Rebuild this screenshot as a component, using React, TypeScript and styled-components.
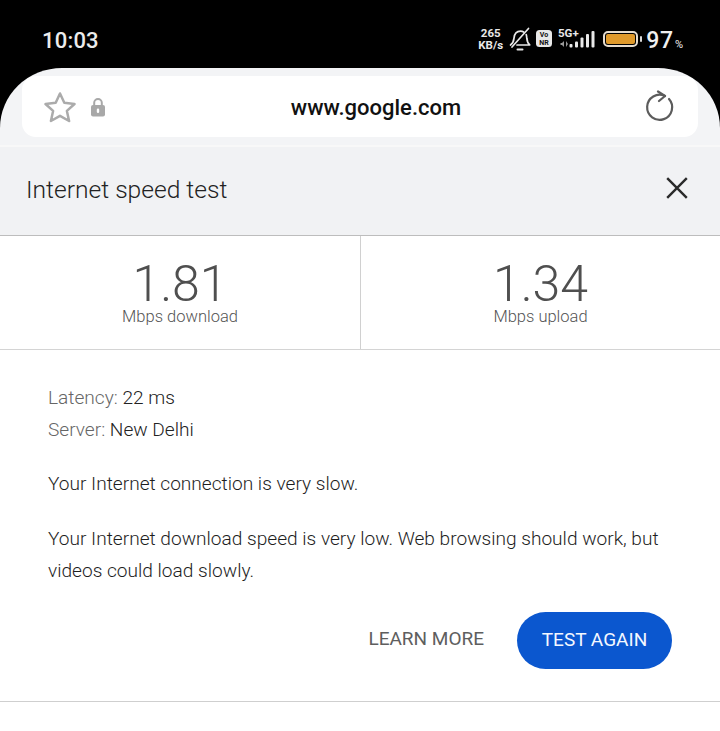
import React from "react";
import styled, { createGlobalStyle } from "styled-components";

const Global = createGlobalStyle`
  html, body { margin: 0; padding: 0; background: #fff; }
  * { box-sizing: border-box; }
  body { font-family: Roboto, "Liberation Sans", sans-serif; }
`;

const Page = styled.div`
  width: 720px;
  height: 731px;
  overflow: hidden;
  background: #fff;
  display: flex;
  flex-direction: column;
`;

const TopArea = styled.div`
  background: #000;
  height: 145px;
  display: flex;
  flex-direction: column;
`;

const StatusBar = styled.div`
  height: 68px;
  flex: none;
  display: flex;
  align-items: center;
  justify-content: space-between;
  padding: 9px 37px 0 42px;
  color: #f2f2f2;
`;

const Time = styled.span`
  font-size: 22px;
  font-weight: 500;
  letter-spacing: 0.2px;
  color: #ececec;
  margin-top: 4px;
`;

const StatusIcons = styled.div`
  display: flex;
  align-items: center;
`;

const Speed = styled.div`
  width: 25px;
  font-size: 11.5px;
  line-height: 12px;
  font-weight: 700;
  color: #e8e8e8;
  text-align: center;
  margin-right: 6px;
  white-space: nowrap;
`;

const Battery = styled.div`
  margin-left: 6px;
  width: 35px;
  height: 16px;
  border: 2px solid #e6ddd0;
  border-radius: 5px;
  padding: 1px;
  position: relative;
`;

const BatteryFill = styled.div`
  width: 100%;
  height: 100%;
  background: #e09a2b;
  border-radius: 2px;
`;

const BatteryTip = styled.div`
  position: absolute;
  right: -6px;
  top: 3px;
  width: 2px;
  height: 6px;
  background: #d8d8d8;
  border-radius: 1px;
`;

const Percent = styled.span`
  margin-left: 8px;
  padding-top: 3px;
  font-size: 23px;
  font-weight: 500;
  color: #f0f0f0;
  letter-spacing: 0.8px;
`;

const PercentSign = styled.span`
  font-size: 11px;
  font-weight: 400;
  letter-spacing: 0;
  margin-left: 1px;
`;

const BrowserBar = styled.div`
  flex: 1;
  background: #f3f4f6;
  border-radius: 62px 62px 0 0 / 60px 60px 0 0;
  padding: 8px 22px 8px;
`;

const Address = styled.div`
  height: 61px;
  background: #fff;
  border-radius: 14px;
  display: flex;
  align-items: center;
  padding: 0 23px 0 22px;
`;

const LeftIcons = styled.div`
  display: flex;
  align-items: center;
  gap: 15px;
  width: 92px;
`;

const Url = styled.div`
  flex: 1;
  text-align: center;
  font-size: 22px;
  font-weight: 500;
  color: #111;
  padding: 1px 29px 0 0;
`;

const Header = styled.div`
  height: 91px;
  background: #f1f2f4;
  border-top: 2px solid #f8f8f8;
  border-bottom: 1px solid #bdbdbd;
  display: flex;
  align-items: center;
  justify-content: space-between;
  padding: 0 32px 4px 26px;
`;

const Title = styled.h1`
  margin: 0;
  font-size: 24.6px;
  font-weight: 300;
  color: #222;
`;

const CloseIcon = styled.svg`
  margin-bottom: 2px;
`;

const Stats = styled.div`
  height: 114px;
  display: grid;
  grid-template-columns: 360px 360px;
  border-bottom: 1px solid #d4d4d4;
`;

const Stat = styled.div<{ $divider?: boolean }>`
  display: flex;
  flex-direction: column;
  align-items: center;
  padding-top: 23px;
  border-left: ${(p) => (p.$divider ? "1px solid #d0d0d0" : "none")};
`;

const StatValue = styled.div`
  font-size: 50px;
  line-height: 50px;
  font-weight: 300;
  color: #4f4f4f;
`;

const StatLabel = styled.div`
  font-size: 16.5px;
  line-height: 15px;
  font-weight: 300;
  color: #555;
`;

const Body = styled.div`
  padding: 32px 48px 0;
  height: 352px;
  border-bottom: 1px solid #cfcfcf;
`;

const Meta = styled.div`
  font-size: 19.1px;
  line-height: 32px;
  color: #222;
  font-weight: 300;
`;

const MetaKey = styled.span`
  color: #666;
`;

const Para = styled.p<{ $top: number }>`
  margin: ${(p) => p.$top}px 0 0;
  font-size: 19.1px;
  line-height: 32px;
  font-weight: 300;
  color: #1e1e1e;
`;

const Actions = styled.div`
  display: flex;
  justify-content: flex-end;
  align-items: center;
  gap: 33px;
  margin-top: 25px;
`;

const LinkButton = styled.span`
  font-size: 19px;
  color: #5e5e5e;
  font-weight: 400;
  padding-bottom: 5px;
`;

const PrimaryButton = styled.button`
  width: 155px;
  height: 57px;
  background: #0b57cf;
  color: #f4f8ff;
  border: 0;
  border-radius: 29px;
  font-family: inherit;
  font-size: 19px;
  font-weight: 400;
  padding: 0 0 2px;
`;

const VoBadge = styled.svg`
  margin: 0 6px 0 5px;
`;

const BellOff = () => (
  <svg width="22" height="24" viewBox="0 0 22 24" fill="none" stroke="#e8e8e8" strokeWidth="1.7" strokeLinecap="round" strokeLinejoin="round">
    <path d="M1.5 18c2.4-1.6 3.2-3.6 3.5-6.8.4-4 2.8-7 6.5-7 1.3 0 2.4.3 3.2.8" />
    <path d="M17.2 7.6c.3 1 .5 2.2.6 3.6.3 3.2 1 5.2 2.9 6.8H8" />
    <path d="M19.5 1.5 3 20" />
    <path d="M8.5 22.5h5" strokeWidth="2" />
  </svg>
);

const VoNr = () => (
  <VoBadge width="16" height="17" viewBox="0 0 16 17">
    <rect x="0" y="0" width="16" height="17" rx="3.5" fill="#e8e8e8" />
    <text x="8" y="7.4" textAnchor="middle" fontSize="7" fontWeight="700" fontFamily="Roboto, sans-serif" fill="#111">Vo</text>
    <text x="8" y="15.4" textAnchor="middle" fontSize="7" fontWeight="700" fontFamily="Roboto, sans-serif" fill="#111">NR</text>
  </VoBadge>
);

const Signal = () => (
  <svg width="39" height="30" viewBox="0 -4 39 30">
    <text x="0" y="8.5" fontSize="11.5" fontWeight="700" fontFamily="Roboto, sans-serif" fill="#e8e8e8">5G+</text>
    <path d="M2.5 15h1.5l2-2v6l-2-2H2.5zM8 13l2 3-2 3z" fill="#9a9a9a" />
    <g fill="#e8e8e8">
      <rect x="11.5" y="16" width="3" height="3.5" rx="1" />
      <rect x="17" y="13.5" width="3" height="6" rx="1" />
      <rect x="22.5" y="9.5" width="3" height="10" rx="1" />
      <rect x="28" y="6" width="3" height="13.5" rx="1" />
      <rect x="33.5" y="3" width="3" height="16.5" rx="1" />
    </g>
  </svg>
);

const Star = () => (
  <svg width="32" height="32" viewBox="0 0 32 32" fill="none" stroke="#ababab" strokeWidth="2.5" strokeLinejoin="round">
    <path d="M16 2.5l4.3 9.2 10.2 1.3-7.6 6.9 2.2 10.1L16 24.8 6.9 30l2.2-10.1L1.5 13l10.2-1.3z" />
  </svg>
);

const Lock = () => (
  <svg width="14" height="20" viewBox="0 0 14 20">
    <path d="M3.2 9V5.8a3.8 3.8 0 0 1 7.6 0V9" fill="none" stroke="#a8a8a8" strokeWidth="2" />
    <rect x="0" y="8" width="14" height="11.5" rx="2" fill="#a8a8a8" />
    <rect x="5.8" y="11.5" width="2.4" height="4.5" rx="1.2" fill="#fff" />
  </svg>
);

const Reload = () => (
  <svg width="30" height="34" viewBox="0 0 30 34" fill="none" stroke="#5c5c5c" strokeWidth="2.2" strokeLinecap="round" strokeLinejoin="round">
    <path d="M24 9A12.5 12.5 0 1 1 20 6" />
    <path d="M13 1.5l7 4.5-6 5" />
  </svg>
);

const Close = () => (
  <CloseIcon width="22" height="22" viewBox="0 0 22 22" fill="none" stroke="#2a2a2a" strokeWidth="2.4">
    <path d="M1.2 1.2l19.6 19.6M20.8 1.2 1.2 20.8" />
  </CloseIcon>
);

export default function App() {
  return (
    <Page>
      <Global />
      <TopArea>
        <StatusBar>
          <Time>10:03</Time>
          <StatusIcons>
            <Speed>265<br />KB/s</Speed>
            <BellOff />
            <VoNr />
            <Signal />
            <Battery>
              <BatteryFill />
              <BatteryTip />
            </Battery>
            <Percent>97<PercentSign>%</PercentSign></Percent>
          </StatusIcons>
        </StatusBar>
        <BrowserBar>
          <Address>
            <LeftIcons>
              <Star />
              <Lock />
            </LeftIcons>
            <Url>www.google.com</Url>
            <Reload />
          </Address>
        </BrowserBar>
      </TopArea>
      <Header>
        <Title>Internet speed test</Title>
        <Close />
      </Header>
      <Stats>
        <Stat>
          <StatValue>1.81</StatValue>
          <StatLabel>Mbps download</StatLabel>
        </Stat>
        <Stat $divider>
          <StatValue>1.34</StatValue>
          <StatLabel>Mbps upload</StatLabel>
        </Stat>
      </Stats>
      <Body>
        <Meta><MetaKey>Latency:</MetaKey> 22 ms</Meta>
        <Meta><MetaKey>Server:</MetaKey> New Delhi</Meta>
        <Para $top={22}>Your Internet connection is very slow.</Para>
        <Para $top={23}>Your Internet download speed is very low. Web browsing should work, but videos could load slowly.</Para>
        <Actions>
          <LinkButton>LEARN MORE</LinkButton>
          <PrimaryButton>TEST AGAIN</PrimaryButton>
        </Actions>
      </Body>
    </Page>
  );
}
